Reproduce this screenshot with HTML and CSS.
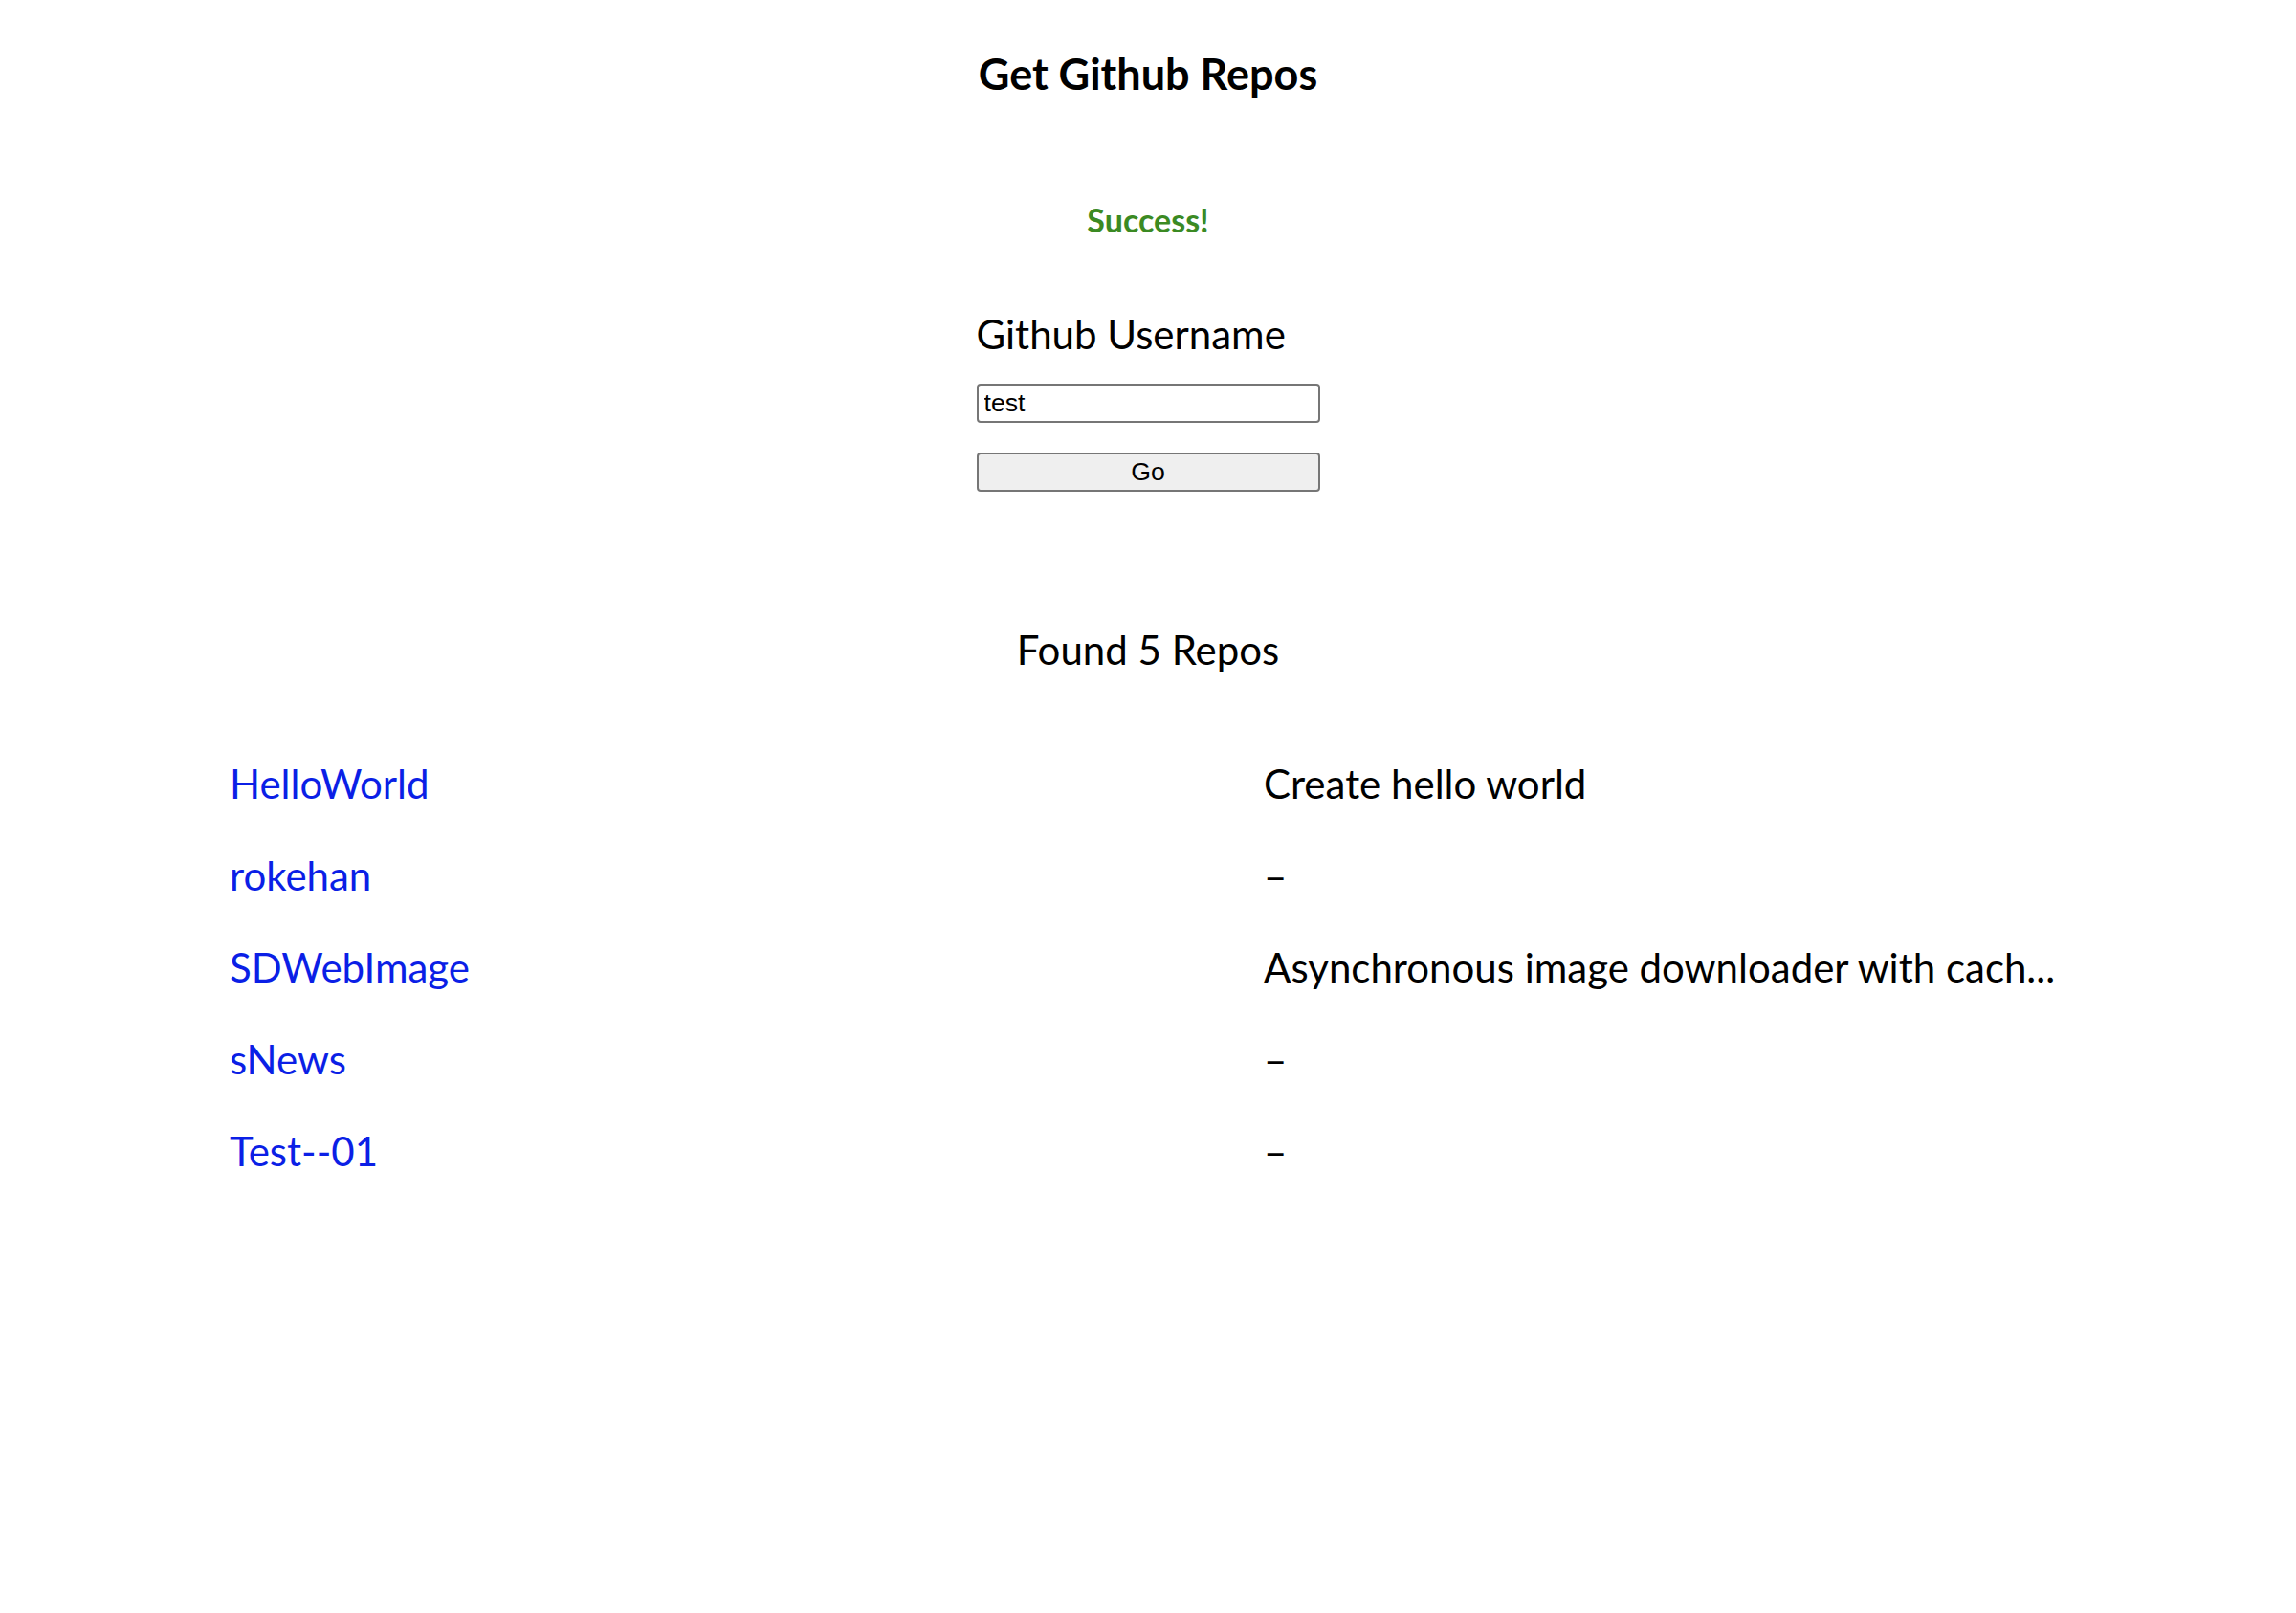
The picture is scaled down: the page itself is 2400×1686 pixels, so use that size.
FILE: index.html
```html
<!DOCTYPE html>
<html lang="en">
<head>
<meta charset="utf-8">
<title>Get Github Repos</title>
<link rel="stylesheet" href="styles.css">
</head>
<body>
<main class="app">
  <h1 class="title">Get Github Repos</h1>
  <p class="status">Success!</p>
  <form class="form">
    <label class="label" for="username">Github Username</label>
    <input class="input" id="username" type="text" value="test">
    <button class="button" type="button">Go</button>
  </form>
  <h2 class="found">Found 5 Repos</h2>
  <div class="repos">
    <div class="repo"><a class="repo-link" href="#">HelloWorld</a><span class="repo-desc">Create hello world</span></div>
    <div class="repo"><a class="repo-link" href="#">rokehan</a><span class="repo-desc">–</span></div>
    <div class="repo"><a class="repo-link" href="#">SDWebImage</a><span class="repo-desc">Asynchronous image downloader with cach...</span></div>
    <div class="repo"><a class="repo-link" href="#">sNews</a><span class="repo-desc">–</span></div>
    <div class="repo"><a class="repo-link" href="#">Test--01</a><span class="repo-desc">–</span></div>
  </div>
</main>
</body>
</html>
```

FILE: styles.css
```css
html, body {
  margin: 0;
  padding: 0;
  background: #ffffff;
}

body {
  font-family: Lato, "Liberation Sans", sans-serif;
  color: #000000;
}

.app {
  display: flex;
  flex-direction: column;
  align-items: center;
  padding-top: 50px;
}

.title {
  margin: 0;
  font-size: 45px;
  line-height: 1.2;
  font-weight: 700;
}

.status {
  margin: 106px 0 0;
  font-size: 34px;
  line-height: 1.2;
  font-weight: 700;
  color: #3b8a23;
}

.form {
  display: flex;
  flex-direction: column;
  width: 359px;
  margin-top: 73px;
}

.label {
  font-size: 42px;
  line-height: 1.2;
}

.input {
  box-sizing: border-box;
  width: 359px;
  height: 41px;
  margin: 27px 0 0;
  padding: 0 6px;
  border: 2px solid #767676;
  border-radius: 4px;
  font-family: "Liberation Sans", Arial, sans-serif;
  font-size: 26.67px;
  color: #000;
  background: #fff;
}

.button {
  box-sizing: border-box;
  width: 359px;
  height: 41px;
  margin: 31px 0 0;
  padding: 0;
  border: 2px solid #767676;
  border-radius: 4px;
  background: #efefef;
  font-family: "Liberation Sans", Arial, sans-serif;
  font-size: 26.67px;
  color: #000;
}

.found {
  margin: 140px 0 0;
  font-size: 42px;
  line-height: 1.2;
  font-weight: 400;
}

.repos {
  width: 1920px;
  margin-top: 67px;
  display: flex;
  flex-direction: column;
}

.repo {
  display: grid;
  grid-template-columns: 1081px 1fr;
  height: 96px;
  align-items: center;
  font-size: 42px;
  line-height: 1.2;
}

.repo-link {
  color: #0b1fe6;
  text-decoration: none;
}

.repo-desc {
  color: #000;
  white-space: nowrap;
}
```
